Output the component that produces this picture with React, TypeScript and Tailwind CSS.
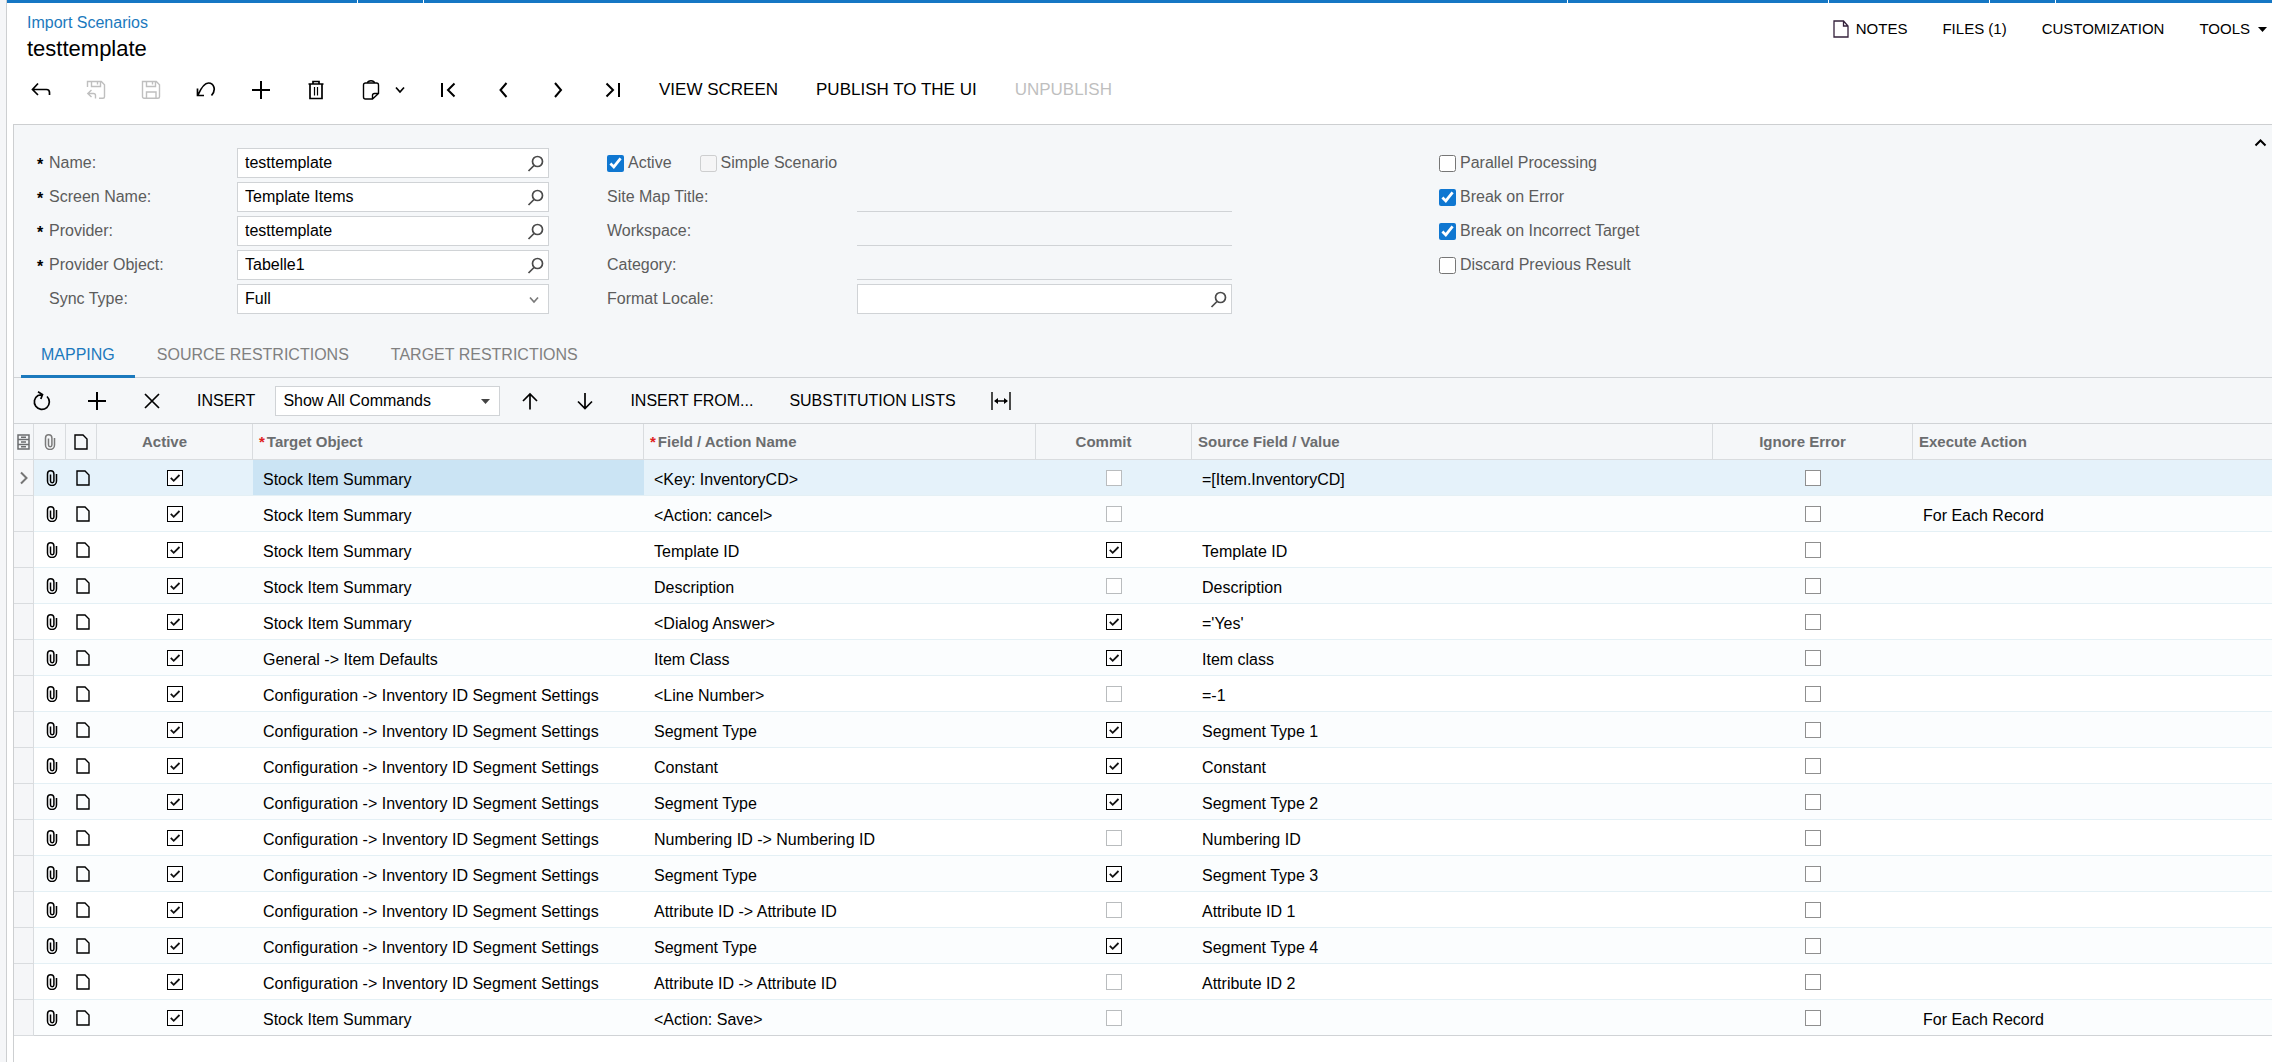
import { useState, type ReactNode } from "react";
import clsx from "clsx";

type MappingRow = {
  target: string;
  field: string;
  commit: boolean;
  source: string;
  execute?: string;
};

const SUMMARY = "Stock Item Summary";
const SEGMENTS = "Configuration -> Inventory ID Segment Settings";

const ROWS: MappingRow[] = [
  { target: SUMMARY, field: "<Key: InventoryCD>", commit: false, source: "=[Item.InventoryCD]" },
  { target: SUMMARY, field: "<Action: cancel>", commit: false, source: "", execute: "For Each Record" },
  { target: SUMMARY, field: "Template ID", commit: true, source: "Template ID" },
  { target: SUMMARY, field: "Description", commit: false, source: "Description" },
  { target: SUMMARY, field: "<Dialog Answer>", commit: true, source: "='Yes'" },
  { target: "General -> Item Defaults", field: "Item Class", commit: true, source: "Item class" },
  { target: SEGMENTS, field: "<Line Number>", commit: false, source: "=-1" },
  { target: SEGMENTS, field: "Segment Type", commit: true, source: "Segment Type 1" },
  { target: SEGMENTS, field: "Constant", commit: true, source: "Constant" },
  { target: SEGMENTS, field: "Segment Type", commit: true, source: "Segment Type 2" },
  { target: SEGMENTS, field: "Numbering ID -> Numbering ID", commit: false, source: "Numbering ID" },
  { target: SEGMENTS, field: "Segment Type", commit: true, source: "Segment Type 3" },
  { target: SEGMENTS, field: "Attribute ID -> Attribute ID", commit: false, source: "Attribute ID 1" },
  { target: SEGMENTS, field: "Segment Type", commit: true, source: "Segment Type 4" },
  { target: SEGMENTS, field: "Attribute ID -> Attribute ID", commit: false, source: "Attribute ID 2" },
  { target: SUMMARY, field: "<Action: Save>", commit: false, source: "", execute: "For Each Record" },
];

const TABS = ["MAPPING", "SOURCE RESTRICTIONS", "TARGET RESTRICTIONS"];

/* Icons */

function Icon({ w = 20, h = 20, sw = 1.7, className, children }: {
  w?: number;
  h?: number;
  sw?: number;
  className?: string;
  children: ReactNode;
}) {
  return (
    <svg
      width={w}
      height={h}
      viewBox={`0 0 ${w} ${h}`}
      fill="none"
      stroke="currentColor"
      strokeWidth={sw}
      className={clsx("shrink-0", className)}
      aria-hidden="true"
    >
      {children}
    </svg>
  );
}

const BackIcon = () => (
  <Icon>
    <path d="M7 3.5 1.5 9.5 7 15M1.5 9.5h14a3 3 0 0 1 3 3V15" />
  </Icon>
);

const SaveCloseIcon = () => (
  <Icon sw={1.4}>
    <path d="M1.5 7V1.5h13.8l3.2 3.200v12a1.500 1.500 0 0 1-1.500 1.500h-4M5.500 1.500v5h9v-5M11.500 2v2.500" />
    <path d="M5.500 10 1.800 13.500l3.700 3.500M1.800 13.500h5.700a2 2 0 0 1 2 2v3" />
  </Icon>
);

const SaveIcon = () => (
  <Icon sw={1.4}>
    <path d="M1.500 1.500h13.800l3.200 3.200v12a1.500 1.500 0 0 1-1.500 1.500H3a1.500 1.500 0 0 1-1.500-1.500zM5.500 1.500v5h9v-5M11.500 2v2.500M5.500 18v-6h9.500v6" />
  </Icon>
);

const UndoIcon = () => (
  <Icon>
    <path d="M1.500 8.500V15.500H8M2 15C5.500 7 8.500 3 12.500 3c5.500 0 8 7 3 12.500" />
  </Icon>
);

const PlusIcon = () => (
  <Icon sw={2}>
    <path d="M10 1v18M1 10h18" />
  </Icon>
);

const TrashIcon = () => (
  <Icon>
    <path d="M2.500 4h15M7 4V1.500h6V4M4 4v14.500h12V4" />
    <path d="M8.500 7v8.500M11.500 7v8.500" strokeWidth="1.200" />
  </Icon>
);

const ClipboardIcon = () => (
  <Icon sw={1.4}>
    <path d="M11.500 19H4.500a2 2 0 0 1-2-2V5a2 2 0 0 1 2-2h11a2 2 0 0 1 2 2v8.500zM17.500 13.500h-4a2 2 0 0 0-2 2V19" />
    <path d="M6.500 3c.5-3 6.500-3 7 0" />
  </Icon>
);

const ChevronDown = ({ className }: { className?: string }) => (
  <Icon w={10} h={8} className={className}>
    <path d="m1 1.500 4 4.500 4-4.500" />
  </Icon>
);

const FirstIcon = () => (
  <Icon sw={2}>
    <path d="M4 3v14M16.500 3.500 10 10l6.500 6.500" />
  </Icon>
);

const PrevIcon = () => (
  <Icon sw={2}>
    <path d="M13.500 3 7.500 10l6 7" />
  </Icon>
);

const NextIcon = () => (
  <Icon sw={2}>
    <path d="m7 3 6 7-6 7" />
  </Icon>
);

const LastIcon = () => (
  <Icon sw={2}>
    <path d="m3.500 3.500 6.500 6.500-6.500 6.500M16 3v14" />
  </Icon>
);

const RefreshIcon = () => (
  <Icon>
    <path d="M15 5.500A7.500 7.500 0 1 1 6 4.500L10.500 3.500M6 .8l4.500 2.700L8.800 8" />
  </Icon>
);

const CrossIcon = () => (
  <Icon>
    <path d="m3 3 14 14M17 3 3 17" />
  </Icon>
);

const UpIcon = () => (
  <Icon>
    <path d="M10 3v15.500M3 10l7-7 7 7" />
  </Icon>
);

const DownIcon = () => (
  <Icon>
    <path d="M10 2v15.500M3 10.500l7 7 7-7" />
  </Icon>
);

const FitIcon = () => (
  <Icon sw={1.4}>
    <path d="M1 1v18M19 1v18M4 10h12" />
    <path d="m3 10 4-3v6zM17 10l-4-3v6z" fill="currentColor" stroke="none" />
  </Icon>
);

const Search = () => (
  <Icon w={17} h={17} className="text-[#4a4a4a]">
    <circle cx="10.500" cy="6.500" r="5" />
    <path d="M7 10.500 1.500 16" />
  </Icon>
);

const Clip = ({ className }: { className?: string }) => (
  <Icon w={12} h={16} sw={1.5} className={className}>
    <path d="M4.500 4.500V11a1.700 1.700 0 0 0 3.400 0V4a3.200 3.200 0 0 0-6.400 0v7a4.500 4.500 0 0 0 9 0V4" />
  </Icon>
);

const Doc = () => (
  <Icon w={14} h={16} sw={1.4} className="text-black">
    <path d="M1 1h8L13 5v10H1z" />
  </Icon>
);

const Caret = ({ className }: { className?: string }) => (
  <svg width="9" height="5" viewBox="0 0 9 5" fill="currentColor" className={className} aria-hidden="true">
    <path d="M0 0h9L4.500 5z" />
  </svg>
);

/* Controls */

function ToolButton({ label, disabled, children }: { label: string; disabled?: boolean; children: ReactNode }) {
  return (
    <button
      aria-label={label}
      disabled={disabled}
      className="flex h-10 w-[55px] shrink-0 items-center justify-center text-black hover:bg-black/5 disabled:text-[#bfbfbf]"
    >
      {children}
    </button>
  );
}

function SearchField({ id, value }: { id: string; value: string }) {
  return (
    <div className="flex h-[30px] items-center border border-[#d0d3d6] bg-white pr-1">
      <input id={id} defaultValue={value} className="h-full min-w-0 flex-1 bg-transparent pl-[7px] text-black outline-none" />
      <button type="button" aria-label="Look up">
        <Search />
      </button>
    </div>
  );
}

function FieldLabel({ htmlFor, required, children }: { htmlFor: string; required?: boolean; children: ReactNode }) {
  return (
    <label htmlFor={htmlFor} className="flex h-[30px] items-center">
      <span className="w-3 pt-1 font-bold text-black">{required && "*"}</span>
      {children}
    </label>
  );
}

function Check({ label, checked, disabled }: { label: string; checked?: boolean; disabled?: boolean }) {
  return (
    <label className="flex h-[30px] items-center gap-1">
      <input type="checkbox" defaultChecked={checked} disabled={disabled} className="size-[17px] accent-[#0f77d1]" />
      {label}
    </label>
  );
}

function GridCheck({ label, checked, muted }: { label: string; checked?: boolean; muted?: boolean }) {
  return (
    <span className="relative mx-auto block size-4">
      <input
        type="checkbox"
        aria-label={label}
        defaultChecked={checked}
        className={clsx(
          "peer block size-4 appearance-none border bg-white checked:border-black",
          muted ? "border-[#b9bcbe]" : "border-[#8f8f8f]"
        )}
      />
      <svg
        width="16"
        height="16"
        viewBox="0 0 16 16"
        fill="none"
        stroke="#111"
        strokeWidth="1.800"
        className="pointer-events-none absolute inset-0 hidden peer-checked:block"
        aria-hidden="true"
      >
        <path d="m3.800 7.800 2.900 3L12.500 5" />
      </svg>
    </span>
  );
}

function HeadCell({ center, required, children }: { center?: boolean; required?: boolean; children?: ReactNode }) {
  return (
    <th
      className={clsx(
        "h-9 border-r border-b border-[#d9dcdf] p-0 text-[15px] font-bold last:border-r-0",
        center ? "pr-5 text-center" : "pl-1.5 text-left"
      )}
    >
      {required && <span className="mr-0.5 text-[#e02020]">*</span>}
      {children}
    </th>
  );
}

function Header() {
  return (
    <header className="flex items-start justify-between pt-2 pr-[5px] pl-5">
      <div>
        <a href="#scenarios" className="block leading-6 text-[#1b79bd]">
          Import Scenarios
        </a>
        <h1 className="text-[22px] leading-7 text-black">testtemplate</h1>
      </div>
      <nav className="flex items-center gap-[35px] pt-1.5 text-[15px] leading-6 text-black">
        <button className="flex items-center gap-[7px]">
          <Icon w={16} h={18} sw={1.3} className="text-[#33203a]">
            <path d="M1 1h9.500L15 6v11H1zM10.500 1v5H15" />
          </Icon>
          NOTES
        </button>
        <button>FILES (1)</button>
        <button>CUSTOMIZATION</button>
        <button className="flex items-center gap-2">
          TOOLS
          <Caret />
        </button>
      </nav>
    </header>
  );
}

function MainToolbar() {
  return (
    <div className="mb-[7px] flex h-[54px] items-center pl-1.5 text-[17px] text-black">
      <ToolButton label="Back"><BackIcon /></ToolButton>
      <ToolButton label="Save and close" disabled><SaveCloseIcon /></ToolButton>
      <ToolButton label="Save" disabled><SaveIcon /></ToolButton>
      <ToolButton label="Undo"><UndoIcon /></ToolButton>
      <ToolButton label="Add"><PlusIcon /></ToolButton>
      <ToolButton label="Delete"><TrashIcon /></ToolButton>
      <button aria-label="Clipboard" className="flex h-10 w-[77px] items-center gap-3.5 pl-[18px]">
        <ClipboardIcon />
        <ChevronDown />
      </button>
      <ToolButton label="First"><FirstIcon /></ToolButton>
      <ToolButton label="Previous"><PrevIcon /></ToolButton>
      <ToolButton label="Next"><NextIcon /></ToolButton>
      <ToolButton label="Last"><LastIcon /></ToolButton>
      <button className="px-[19px]">VIEW SCREEN</button>
      <button className="px-[19px]">PUBLISH TO THE UI</button>
      <button disabled className="px-[19px] text-[#bfbfbf]">UNPUBLISH</button>
    </div>
  );
}

function ScenarioForm() {
  return (
    <form className="flex pt-[23px] pr-[5px] pb-[19px] pl-[23px] text-[#5c5c5c]">
      <div className="grid w-[512px] shrink-0 grid-cols-[200px_312px] gap-y-1">
        <FieldLabel htmlFor="name" required>Name:</FieldLabel>
        <SearchField id="name" value="testtemplate" />
        <FieldLabel htmlFor="screen" required>Screen Name:</FieldLabel>
        <SearchField id="screen" value="Template Items" />
        <FieldLabel htmlFor="provider" required>Provider:</FieldLabel>
        <SearchField id="provider" value="testtemplate" />
        <FieldLabel htmlFor="object" required>Provider Object:</FieldLabel>
        <SearchField id="object" value="Tabelle1" />
        <FieldLabel htmlFor="sync">Sync Type:</FieldLabel>
        <div className="relative h-[30px]">
          <select id="sync" className="h-full w-full appearance-none border border-[#d0d3d6] bg-white pl-[7px] text-black">
            <option>Full</option>
          </select>
          <ChevronDown className="pointer-events-none absolute top-3 right-2.5 text-[#7a7a7a]" />
        </div>
      </div>

      <div className="ml-[58px] grid w-[625px] shrink-0 grid-cols-[250px_375px] content-start gap-y-1">
        <div className="col-span-2 flex gap-7">
          <Check label="Active" checked />
          <Check label="Simple Scenario" disabled />
        </div>
        {["Site Map Title:", "Workspace:", "Category:"].map((label) => (
          <label key={label} className="col-span-2 grid h-[30px] grid-cols-subgrid items-center">
            {label}
            <input readOnly className="h-[30px] border-b border-[#d0d3d6] bg-transparent outline-none" />
          </label>
        ))}
        <label htmlFor="locale" className="flex h-[30px] items-center">Format Locale:</label>
        <SearchField id="locale" value="" />
      </div>

      <div className="ml-[207px] flex flex-1 flex-col items-start gap-1">
        <Check label="Parallel Processing" />
        <Check label="Break on Error" checked />
        <Check label="Break on Incorrect Target" checked />
        <Check label="Discard Previous Result" />
      </div>

      <button type="button" aria-label="Collapse" className="-mt-3 self-start text-black">
        <Icon w={13} h={13} sw={2}>
          <path d="m1.500 9.500 5-5 5 5" />
        </Icon>
      </button>
    </form>
  );
}

function GridToolbar() {
  return (
    <div className="flex h-[46px] items-center border-b border-[#d0d3d6] text-black">
      <ToolButton label="Refresh"><RefreshIcon /></ToolButton>
      <ToolButton label="Add row"><PlusIcon /></ToolButton>
      <ToolButton label="Delete row"><CrossIcon /></ToolButton>
      <button className="px-[18px]">INSERT</button>
      <div className="relative mx-0.5 h-[30px] w-[225px]">
        <select aria-label="Commands filter" className="h-full w-full appearance-none border border-[#d0d3d6] bg-white pl-[7px]">
          <option>Show All Commands</option>
        </select>
        <Caret className="pointer-events-none absolute top-[13px] right-2.5 text-[#444]" />
      </div>
      <ToolButton label="Move up"><UpIcon /></ToolButton>
      <ToolButton label="Move down"><DownIcon /></ToolButton>
      <button className="px-[18px]">INSERT FROM...</button>
      <button className="px-[18px]">SUBSTITUTION LISTS</button>
      <ToolButton label="Fit columns"><FitIcon /></ToolButton>
    </div>
  );
}

function MappingTable() {
  const [selected, setSelected] = useState(0);

  return (
    <table className="w-full table-fixed border-separate border-spacing-0">
      <colgroup>
        <col className="w-5" />
        <col className="w-8" />
        <col className="w-[31px]" />
        <col className="w-[156px]" />
        <col className="w-[391px]" />
        <col className="w-[392px]" />
        <col className="w-[156px]" />
        <col className="w-[521px]" />
        <col className="w-[200px]" />
        <col />
      </colgroup>
      <thead className="bg-[#f5f7f9] text-[#6b6d6f]">
        <tr>
          <th className="border-r border-b border-[#d9dcdf] p-0">
            <Icon w={13} h={16} sw={1.5} className="mx-auto">
              <path d="M1 1h11v14H1zM1 5.500h11M1 10.500h11M4 3.300h5M4 8h5M4 12.800h5" />
            </Icon>
          </th>
          <th className="border-r border-b border-[#d9dcdf] p-0">
            <Clip className="mx-auto text-[#7a7a7a]" />
          </th>
          <th className="border-r border-b border-[#d9dcdf] p-0 pl-2">
            <Doc />
          </th>
          <HeadCell center>Active</HeadCell>
          <HeadCell required>Target Object</HeadCell>
          <HeadCell required>Field / Action Name</HeadCell>
          <HeadCell center>Commit</HeadCell>
          <HeadCell>Source Field / Value</HeadCell>
          <HeadCell center>Ignore Error</HeadCell>
          <HeadCell>Execute Action</HeadCell>
        </tr>
      </thead>
      <tbody className="text-black">
        {ROWS.map((row, i) => (
          <tr
            key={i}
            onClick={() => setSelected(i)}
            className={clsx(
              "*:h-9 *:border-b *:p-0 *:whitespace-nowrap",
              i === selected ? "bg-[#e5f2fa]" : i % 2 ? "bg-[#fbfdfe]" : "bg-white",
              i === ROWS.length - 1 ? "*:border-[#d0d3d6]" : "*:border-[#e4f0f5]"
            )}
          >
            {/* Row selector */}
            <td className="border-r border-[#d9dcdf]! bg-[#f5f6f8]">
              {i === selected && (
                <Icon w={10} h={14} sw={2} className="mx-auto text-[#757575]">
                  <path d="m2 1.500 5.500 5.500L2 12.500" />
                </Icon>
              )}
            </td>
            <td>
              <Clip className="ml-3" />
            </td>
            <td className="pl-2.5!">
              <Doc />
            </td>
            <td>
              <GridCheck label="Active" checked />
            </td>
            <td className={clsx("pt-1! pl-2.5!", i === selected && "bg-[#cbe4f4]")}>{row.target}</td>
            <td className="pt-1! pl-2.5!">{row.field}</td>
            <td>
              <GridCheck label="Commit" checked={row.commit} muted />
            </td>
            <td className="pt-1! pl-2.5!">{row.source}</td>
            <td>
              <GridCheck label="Ignore Error" />
            </td>
            <td className="pt-1! pl-2.5!">{row.execute}</td>
          </tr>
        ))}
      </tbody>
    </table>
  );
}

export default function App() {
  const [tab, setTab] = useState(TABS[0]);

  return (
    <div className="flex min-h-screen bg-white font-['Liberation_Sans',Arial,sans-serif] text-[16px] leading-5">
      {/* Collapsed side menu */}
      <div className="w-[7px] shrink-0 border-r border-[#cdcfd1] bg-[#f5f6f8]" />

      <div className="flex min-w-0 flex-1 flex-col">
        <div className="flex h-[3px] gap-px">
          <div className="w-[350px] bg-[#1577c4]" />
          <div className="w-[65px] bg-[#1577c4]" />
          <div className="flex-1 bg-[#1577c4]" />
          <div className="w-[260px] bg-[#1577c4]" />
          <div className="w-[160px] bg-[#1577c4]" />
          <div className="w-[65px] bg-[#1577c4]" />
          <div className="w-[216px] bg-[#1577c4]" />
        </div>
        <Header />
        <MainToolbar />

        <main className="ml-1.5 flex-1 border-t border-l border-[#cdcfd1]">
          <div className="bg-[#f5f7f9]">
            <ScenarioForm />
            <nav className="flex h-[45px] gap-0.5 border-b border-[#d0d3d6] pl-[7px]">
              {TABS.map((name) => (
                <button
                  key={name}
                  onClick={() => setTab(name)}
                  className={clsx(
                    "-mb-px border-b-3 px-5 pt-0.5",
                    name === tab ? "border-[#1b79bd] text-[#1b79bd]" : "border-transparent text-[#808080]"
                  )}
                >
                  {name}
                </button>
              ))}
            </nav>
            <GridToolbar />
          </div>
          <MappingTable />
        </main>
      </div>
    </div>
  );
}
